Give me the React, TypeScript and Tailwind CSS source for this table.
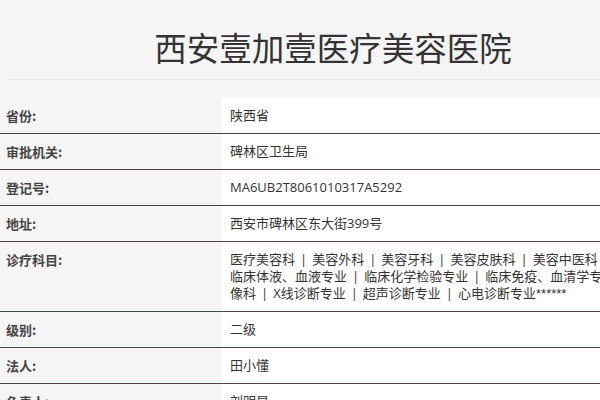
import React from "react";

const font = { fontFamily: '"Noto Sans CJK SC", "Noto Sans", sans-serif' };
const valFont = { fontFamily: '"Open Sans", "Noto Sans CJK SC", sans-serif' };

function Sep() {
  return <span className="mx-[5px]">|</span>;
}

function Items({ items, tail }: { items: string[]; tail?: string }) {
  return (
    <span className="block whitespace-nowrap">
      {items.map((t, i) => (
        <React.Fragment key={i}>
          {i > 0 && <Sep />}
          {t}
        </React.Fragment>
      ))}
      {tail && <span style={{ fontFamily: '"Liberation Sans", sans-serif' }}>{tail}</span>}
    </span>
  );
}

const rows: { label: string; value: React.ReactNode }[] = [
  { label: "省份:", value: "陕西省" },
  { label: "审批机关:", value: "碑林区卫生局" },
  { label: "登记号:", value: "MA6UB2T8061010317A5292" },
  { label: "地址:", value: "西安市碑林区东大街399号" },
  {
    label: "诊疗科目:",
    value: (
      <>
        <Items items={["医疗美容科", "美容外科", "美容牙科", "美容皮肤科", "美容中医科", "医学检验科", ""]} />
        <Items items={["临床体液、血液专业", "临床化学检验专业", "临床免疫、血清学专业", "医学影"]} />
        <Items items={["像科", "X线诊断专业", "超声诊断专业", "心电诊断专业"]} tail="******" />
      </>
    ),
  },
  { label: "级别:", value: "二级" },
  { label: "法人:", value: "田小懂" },
  { label: "负责人:", value: "刘明星" },
];

export default function App() {
  return (
    <div className="w-[600px] h-[400px] overflow-hidden bg-[#f5f5f5] text-[#333]" style={font}>
      <div className="w-[666px]">
        <div className="h-[79px] pt-[21px]">
          <h1 className="text-center text-[32.5px] leading-[52px] font-normal text-[#333]">西安壹加壹医疗美容医院</h1>
        </div>
        <div className="ml-[7px] h-px bg-[#e6e6e6]" />
        <div className="mt-[18px] w-[900px]">
          {rows.map((r, i) => (
            <div key={i} className="flex border-b border-[#1d5c45]">
              <div className="w-[221px] shrink-0 pl-[6px] py-[9px] text-[13px] leading-[17px] font-bold text-[#444]">
                {r.label}
              </div>
              <div className="flex-1 bg-white pl-[9px] py-[9px] text-[13px] leading-[17px] text-[#333]" style={valFont}>
                {r.value}
              </div>
            </div>
          ))}
        </div>
      </div>
    </div>
  );
}
